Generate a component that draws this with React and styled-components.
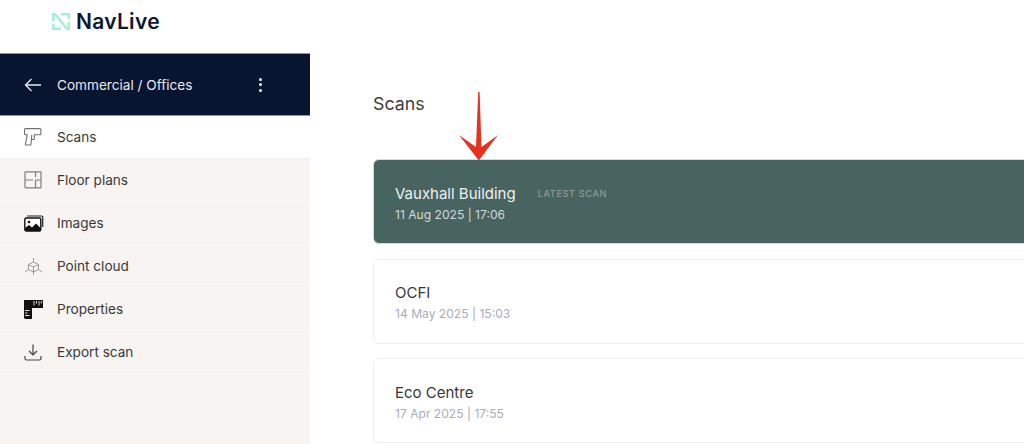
import React from "react";
import styled, { createGlobalStyle } from "styled-components";

const navItems = [
  { label: "Scans", icon: <GunIcon />, active: true },
  { label: "Floor plans", icon: <FloorIcon /> },
  { label: "Images", icon: <ImagesIcon /> },
  { label: "Point cloud", icon: <CloudIcon /> },
  { label: "Properties", icon: <RulerIcon /> },
  { label: "Export scan", icon: <ExportIcon /> },
];

const scans = [
  { name: "Vauxhall Building", date: "11 Aug 2025 | 17:06", latest: true },
  { name: "OCFI", date: "14 May 2025 | 15:03" },
  { name: "Eco Centre", date: "17 Apr 2025 | 17:55" },
];

export default function App() {
  return (
    <Page>
      <GlobalStyle />
      <Sidebar>
        <Brand>
          <LogoMark />
          <BrandName>NavLive</BrandName>
        </Brand>
        <ProjectBar>
          <svg width="18" height="14" viewBox="0 0 18 14" fill="none" stroke="#e8eaf0" strokeWidth="1.3">
            <path d="M17 7H1.5M7.5 1L1.5 7l6 6" />
          </svg>
          <ProjectName>Commercial / Offices</ProjectName>
          <Dots>
            <i />
            <i />
            <i />
          </Dots>
        </ProjectBar>
        <Nav>
          {navItems.map((item) => (
            <NavRow key={item.label} $active={item.active}>
              <IconSlot>{item.icon}</IconSlot>
              {item.label}
            </NavRow>
          ))}
        </Nav>
      </Sidebar>
      <Main>
        <Title>Scans</Title>
        <CardList>
          {scans.map((scan) => (
            <Card key={scan.name} $latest={scan.latest}>
              <NameLine>
                <ScanName $latest={scan.latest}>{scan.name}</ScanName>
                {scan.latest && <Badge>LATEST SCAN</Badge>}
              </NameLine>
              <ScanDate $latest={scan.latest}>{scan.date}</ScanDate>
            </Card>
          ))}
        </CardList>
        <Arrow width="42" height="70" viewBox="0 0 42 70">
          <path d="M20.2 0h1.4l1.9 55L40 43 20.8 68.5 1 43l17 12z" fill="#e8321f" />
        </Arrow>
      </Main>
    </Page>
  );
}

function LogoMark() {
  return (
    <svg width="18" height="17" viewBox="0 0 18 17" fill="none" stroke="#a8efd8" strokeWidth="2.6">
      <path d="M9 1.3h7.7V6M9 15.7H1.3V11" />
      <path d="M1.3 8V1.3h2L14.7 15.7h2V9" />
    </svg>
  );
}

function GunIcon() {
  return (
    <svg width="18" height="18" viewBox="0 0 18 18" fill="none" stroke="#6f6f72" strokeWidth="1.1">
      <path d="M1.5.6h14.4a1 1 0 0 1 1 1v4.2a1 1 0 0 1-1 1H10.6L10 11.5H7.4L7 16.4a.6.6 0 0 1-.6.6H2a.6.6 0 0 1-.6-.7L3.2 6.8H1.5a1 1 0 0 1-1-1V1.6a1 1 0 0 1 1-1z" />
      <path d="M7.4 11.5l.4-4.7" />
    </svg>
  );
}

function FloorIcon() {
  return (
    <svg width="18" height="18" viewBox="0 0 18 18" fill="none" stroke="#7d7d80" strokeWidth="1.2">
      <rect x="1" y="0.8" width="16" height="16" rx="0.5" />
      <path d="M11.5 1v5M11.5 9v8M1 9h8M11.5 9H17" />
    </svg>
  );
}

function ImagesIcon() {
  return (
    <svg width="20" height="17" viewBox="0 0 20 17">
      <path d="M3 1h14.5a1.2 1.2 0 0 1 1.2 1.2V12" fill="none" stroke="#222" strokeWidth="1.2" />
      <rect x="0.8" y="3" width="16" height="13" rx="1.5" fill="#fff" stroke="#111" strokeWidth="1.4" />
      <circle cx="5" cy="7" r="1.3" fill="#111" />
      <path d="M1 16v-3l4-3 3 2.5 4-4 5 5V16z" fill="#111" />
    </svg>
  );
}

function CloudIcon() {
  return (
    <svg width="19" height="19" viewBox="0 0 19 19" fill="none" stroke="#8d8d8e" strokeWidth="0.9">
      <path d="M9.5 1v4M1 15l3.5-2.5M18 15l-3.5-2.5M9.5 18v-3" />
      <path d="M9.5 5l5 2.5v5l-5 2.5-5-2.5v-5z" />
      <path d="M4.5 7.5l5 2.5 5-2.5M9.5 10v5" />
    </svg>
  );
}

function RulerIcon() {
  return (
    <svg width="19" height="19" viewBox="0 0 19 19">
      <path d="M0 0h19v8H8v11H1l-1-1z" fill="#111" />
      <path d="M10 1v4.5M12.5 1v2.5M15 1v4.5M17.3 1v2.5M1 10.5h4.5M1 13h2.5M1 15.5h4.5" stroke="#f7f4f1" strokeWidth="0.9" />
    </svg>
  );
}

function ExportIcon() {
  return (
    <svg width="18" height="17" viewBox="0 0 18 17" fill="none" stroke="#444" strokeWidth="1.2">
      <path d="M9 .5v10M5 7l4 4 4-4M1 12v2.5a1.5 1.5 0 0 0 1.5 1.5h13a1.5 1.5 0 0 0 1.5-1.5V12" />
    </svg>
  );
}

const GlobalStyle = createGlobalStyle`
  html, body {
    margin: 0;
    background: #fff;
    overflow: hidden;
  }
  body {
    font-family: Inter, "Liberation Sans", sans-serif;
  }
`;

const Page = styled.div`
  display: grid;
  grid-template-columns: 310px 1fr;
  width: 1024px;
  height: 444px;
  overflow: hidden;
`;

const Sidebar = styled.aside`
  display: flex;
  flex-direction: column;
  background: #f7f4f1;
`;

const Brand = styled.div`
  display: flex;
  align-items: center;
  gap: 6px;
  height: 53px;
  padding: 0 0 10px 52px;
  box-sizing: border-box;
  background: #fff;
`;

const BrandName = styled.span`
  font-size: 21px;
  font-weight: 600;
  color: #0b1733;
  letter-spacing: 0.3px;
`;

const ProjectBar = styled.div`
  display: flex;
  align-items: center;
  height: 63px;
  padding: 0 0 0 24px;
  box-sizing: border-box;
  background: #081531;
  border-top: 1px solid #8d93a6;
  border-bottom: 1px solid #8d93a6;
`;

const ProjectName = styled.span`
  margin-left: 15px;
  width: 202px;
  font-size: 13.6px;
  color: #e8eaf0;
`;

const Dots = styled.div`
  display: flex;
  flex-direction: column;
  gap: 2.5px;
  i {
    width: 3px;
    height: 3px;
    border-radius: 50%;
    background: #f0f1f4;
  }
`;

const Nav = styled.nav`
  display: flex;
  flex-direction: column;
`;

const NavRow = styled.div`
  display: flex;
  align-items: center;
  height: 43px;
  box-sizing: border-box;
  padding-left: 24px;
  font-size: 13.6px;
  color: #38383a;
  background: ${(p) => (p.$active ? "#fff" : "#f7f4f1")};
  border-bottom: 1px solid ${(p) => (p.$active ? "#f2f0ee" : "#fbfafa")};
`;

const IconSlot = styled.span`
  display: flex;
  align-items: center;
  width: 33px;
`;

const Main = styled.main`
  position: relative;
  padding: 93px 0 0 63px;
`;

const Title = styled.h1`
  margin: 0;
  font-size: 17.8px;
  font-weight: 400;
  line-height: 22px;
  color: #3d3d40;
`;

const CardList = styled.div`
  display: flex;
  flex-direction: column;
  gap: 14.5px;
  margin-top: 44px;
  width: 760px;
`;

const Card = styled.div`
  height: 85px;
  box-sizing: border-box;
  padding: 24.5px 21px 0;
  border-radius: 6px;
  background: ${(p) => (p.$latest ? "#486460" : "#fff")};
  border: 1px solid ${(p) => (p.$latest ? "#d5d9d8" : "#f0efee")};
`;

const NameLine = styled.div`
  display: flex;
  align-items: center;
  gap: 22px;
`;

const ScanName = styled.span`
  font-size: 15px;
  line-height: 18px;
  color: ${(p) => (p.$latest ? "#eef1f0" : "#38383a")};
`;

const Badge = styled.span`
  font-size: 9.2px;
  font-weight: 500;
  letter-spacing: 0.6px;
  color: #8a9c99;
`;

const ScanDate = styled.div`
  margin-top: 4px;
  font-size: 12.1px;
  line-height: 15px;
  color: ${(p) => (p.$latest ? "#d3dbd9" : "#a9adbb")};
`;

const Arrow = styled.svg`
  position: absolute;
  left: 148px;
  top: 92px;
`;
